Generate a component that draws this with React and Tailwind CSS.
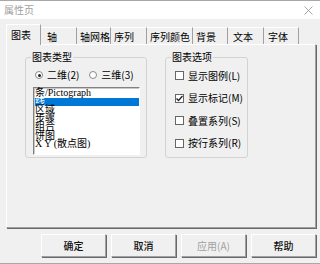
const tabs = [
    { label: '图表', w: 'w-[35px]', pl: 'pl-[4px]' },
    { label: '轴', w: 'w-[36px]', pl: 'pl-[6px]' },
    { label: '轴网格', w: 'w-[34px]', pl: 'pl-[3px]' },
    { label: '序列', w: 'w-[36px]', pl: 'pl-[3px]' },
    { label: '序列颜色', w: 'w-[46px]', pl: 'pl-[3px]' },
    { label: '背景', w: 'w-[35px]', pl: 'pl-[3px]' },
    { label: '文本', w: 'w-[36px]', pl: 'pl-[5px]' },
    { label: '字体', w: 'w-[35px]', pl: 'pl-[4px]' },
];

const chartTypes = ['条/Pictograph', '线', '区域', '步骤', '组合', '饼图', 'X Y (散点图)'];

const options = [
    { label: '显示图例(L)', checked: false },
    { label: '显示标记(M)', checked: true },
    { label: '叠置系列(S)', checked: false },
    { label: '按行系列(R)', checked: false },
];

const Radio = ({ checked, label }) => (
    <div className="flex items-center gap-[4px] whitespace-nowrap">
        <span className="w-[8px] h-[8px] rounded-full border border-[#8a8a8a] bg-white flex items-center justify-center">
            {checked && <span className="w-[3px] h-[3px] rounded-full bg-[#222]"></span>}
        </span>
        <span>{label}</span>
    </div>
);

const Checkbox = ({ checked, label }) => (
    <div className="flex items-center gap-[4px] h-[13px] whitespace-nowrap">
        <span className="w-[9px] h-[9px] shrink-0 border border-[#666] bg-white flex items-center justify-center">
            {checked && (
                <svg width="7" height="7" viewBox="0 0 7 7">
                    <path d="M0.5 3.5 L2.5 5.5 L6.5 1" fill="none" stroke="#222" strokeWidth="1.3" />
                </svg>
            )}
        </span>
        <span>{label}</span>
    </div>
);

const Button = ({ label, disabled }) => (
    <button
        className={`w-[65px] h-[23px] bg-[#f0f0f0] border border-t-white border-l-white border-r-[#a0a0a0] border-b-[#a0a0a0] shadow-[1px_1px_0_#696969] text-[10px] ${disabled ? 'text-[#a0a0a0]' : 'text-[#111] font-medium'}`}
    >
        {label}
    </button>
);

export default function App() {
    return (
        <div
            className="w-[320px] h-[264px] bg-[#f0f0f0] border-t border-b border-[#a8a8a8] flex flex-col text-[10px] text-black overflow-hidden"
            style={{ fontFamily: '"Noto Sans CJK SC", "Liberation Sans", sans-serif' }}
        >
            {/* title bar */}
            <div className="h-[18px] bg-white flex items-center justify-between pl-[4px] pr-[7px]">
                <span className="text-[#a0a0a0] text-[10px] leading-[12px]">属性页</span>
                <svg width="9" height="9" viewBox="0 0 9 9">
                    <path d="M0.5 0.5 L8.5 8.5 M8.5 0.5 L0.5 8.5" stroke="#9a9a9a" strokeWidth="0.9" />
                </svg>
            </div>

            {/* tabs */}
            <div className="flex items-end h-[20px] mt-[5px] pl-[6px] whitespace-nowrap">
                {tabs.map((t, i) =>
                    i === 0 ? (
                        <div
                            key={t.label}
                            className={`${t.w} ${t.pl} h-[21px] -mb-[1px] relative z-10 bg-[#f0f0f0] border-t border-l border-white border-r border-r-[#a0a0a0] flex items-center leading-[12px]`}
                        >
                            {t.label}
                        </div>
                    ) : (
                        <div
                            key={t.label}
                            className={`${t.w} ${t.pl} h-[17px] border-t border-white border-r border-r-[#a0a0a0] flex items-center pt-[2px] leading-[12px]`}
                        >
                            {t.label}
                        </div>
                    )
                )}
            </div>

            {/* tab page */}
            <div className="ml-[6px] w-[310px] h-[184px] border-t border-l border-white border-r border-b border-r-[#a0a0a0] border-b-[#a0a0a0] shadow-[1px_1px_0_#696969] flex gap-[18px] pl-[18px] pt-[6px]">
                <fieldset className="w-[122px] h-[107px] border border-[#d3d3d3] rounded-[3px] flex flex-col">
                    <legend className="ml-[5px] px-[1px] leading-[12px]">图表类型</legend>
                    <div className="flex gap-[10px] mt-[6px] pl-[9px] leading-[12px]">
                        <Radio checked label="二维(2)" />
                        <Radio label="三维(3)" />
                    </div>
                    <div
                        className="mt-[6px] ml-[7px] w-[107px] h-[68px] bg-white border border-t-[#828282] border-l-[#828282] border-r-white border-b-white shadow-[inset_1px_1px_0_#c8c8c8] pl-[1px] pt-[1px] text-[10px] leading-[8.5px]"
                        style={{ fontFamily: '"Liberation Serif", "Noto Sans CJK SC", serif' }}
                    >
                        {chartTypes.map((c, i) => (
                            <div
                                key={c}
                                className={`h-[8.5px] whitespace-nowrap ${i === 1 ? 'bg-[#0078d7] text-white' : ''}`}
                            >
                                {c}
                            </div>
                        ))}
                    </div>
                </fieldset>

                <fieldset className="w-[83px] h-[107px] border border-[#d3d3d3] rounded-[3px] flex flex-col">
                    <legend className="ml-[5px] px-[1px] leading-[12px]">图表选项</legend>
                    <div className="flex flex-col gap-[9.5px] mt-[6px] pl-[9px] leading-[12px]">
                        {options.map((o) => (
                            <Checkbox key={o.label} checked={o.checked} label={o.label} />
                        ))}
                    </div>
                </fieldset>
            </div>

            {/* buttons */}
            <div className="flex gap-[5px] pl-[41px] mt-[6px]">
                <Button label="确定" />
                <Button label="取消" />
                <Button label="应用(A)" disabled />
                <Button label="帮助" />
            </div>
        </div>
    );
}
